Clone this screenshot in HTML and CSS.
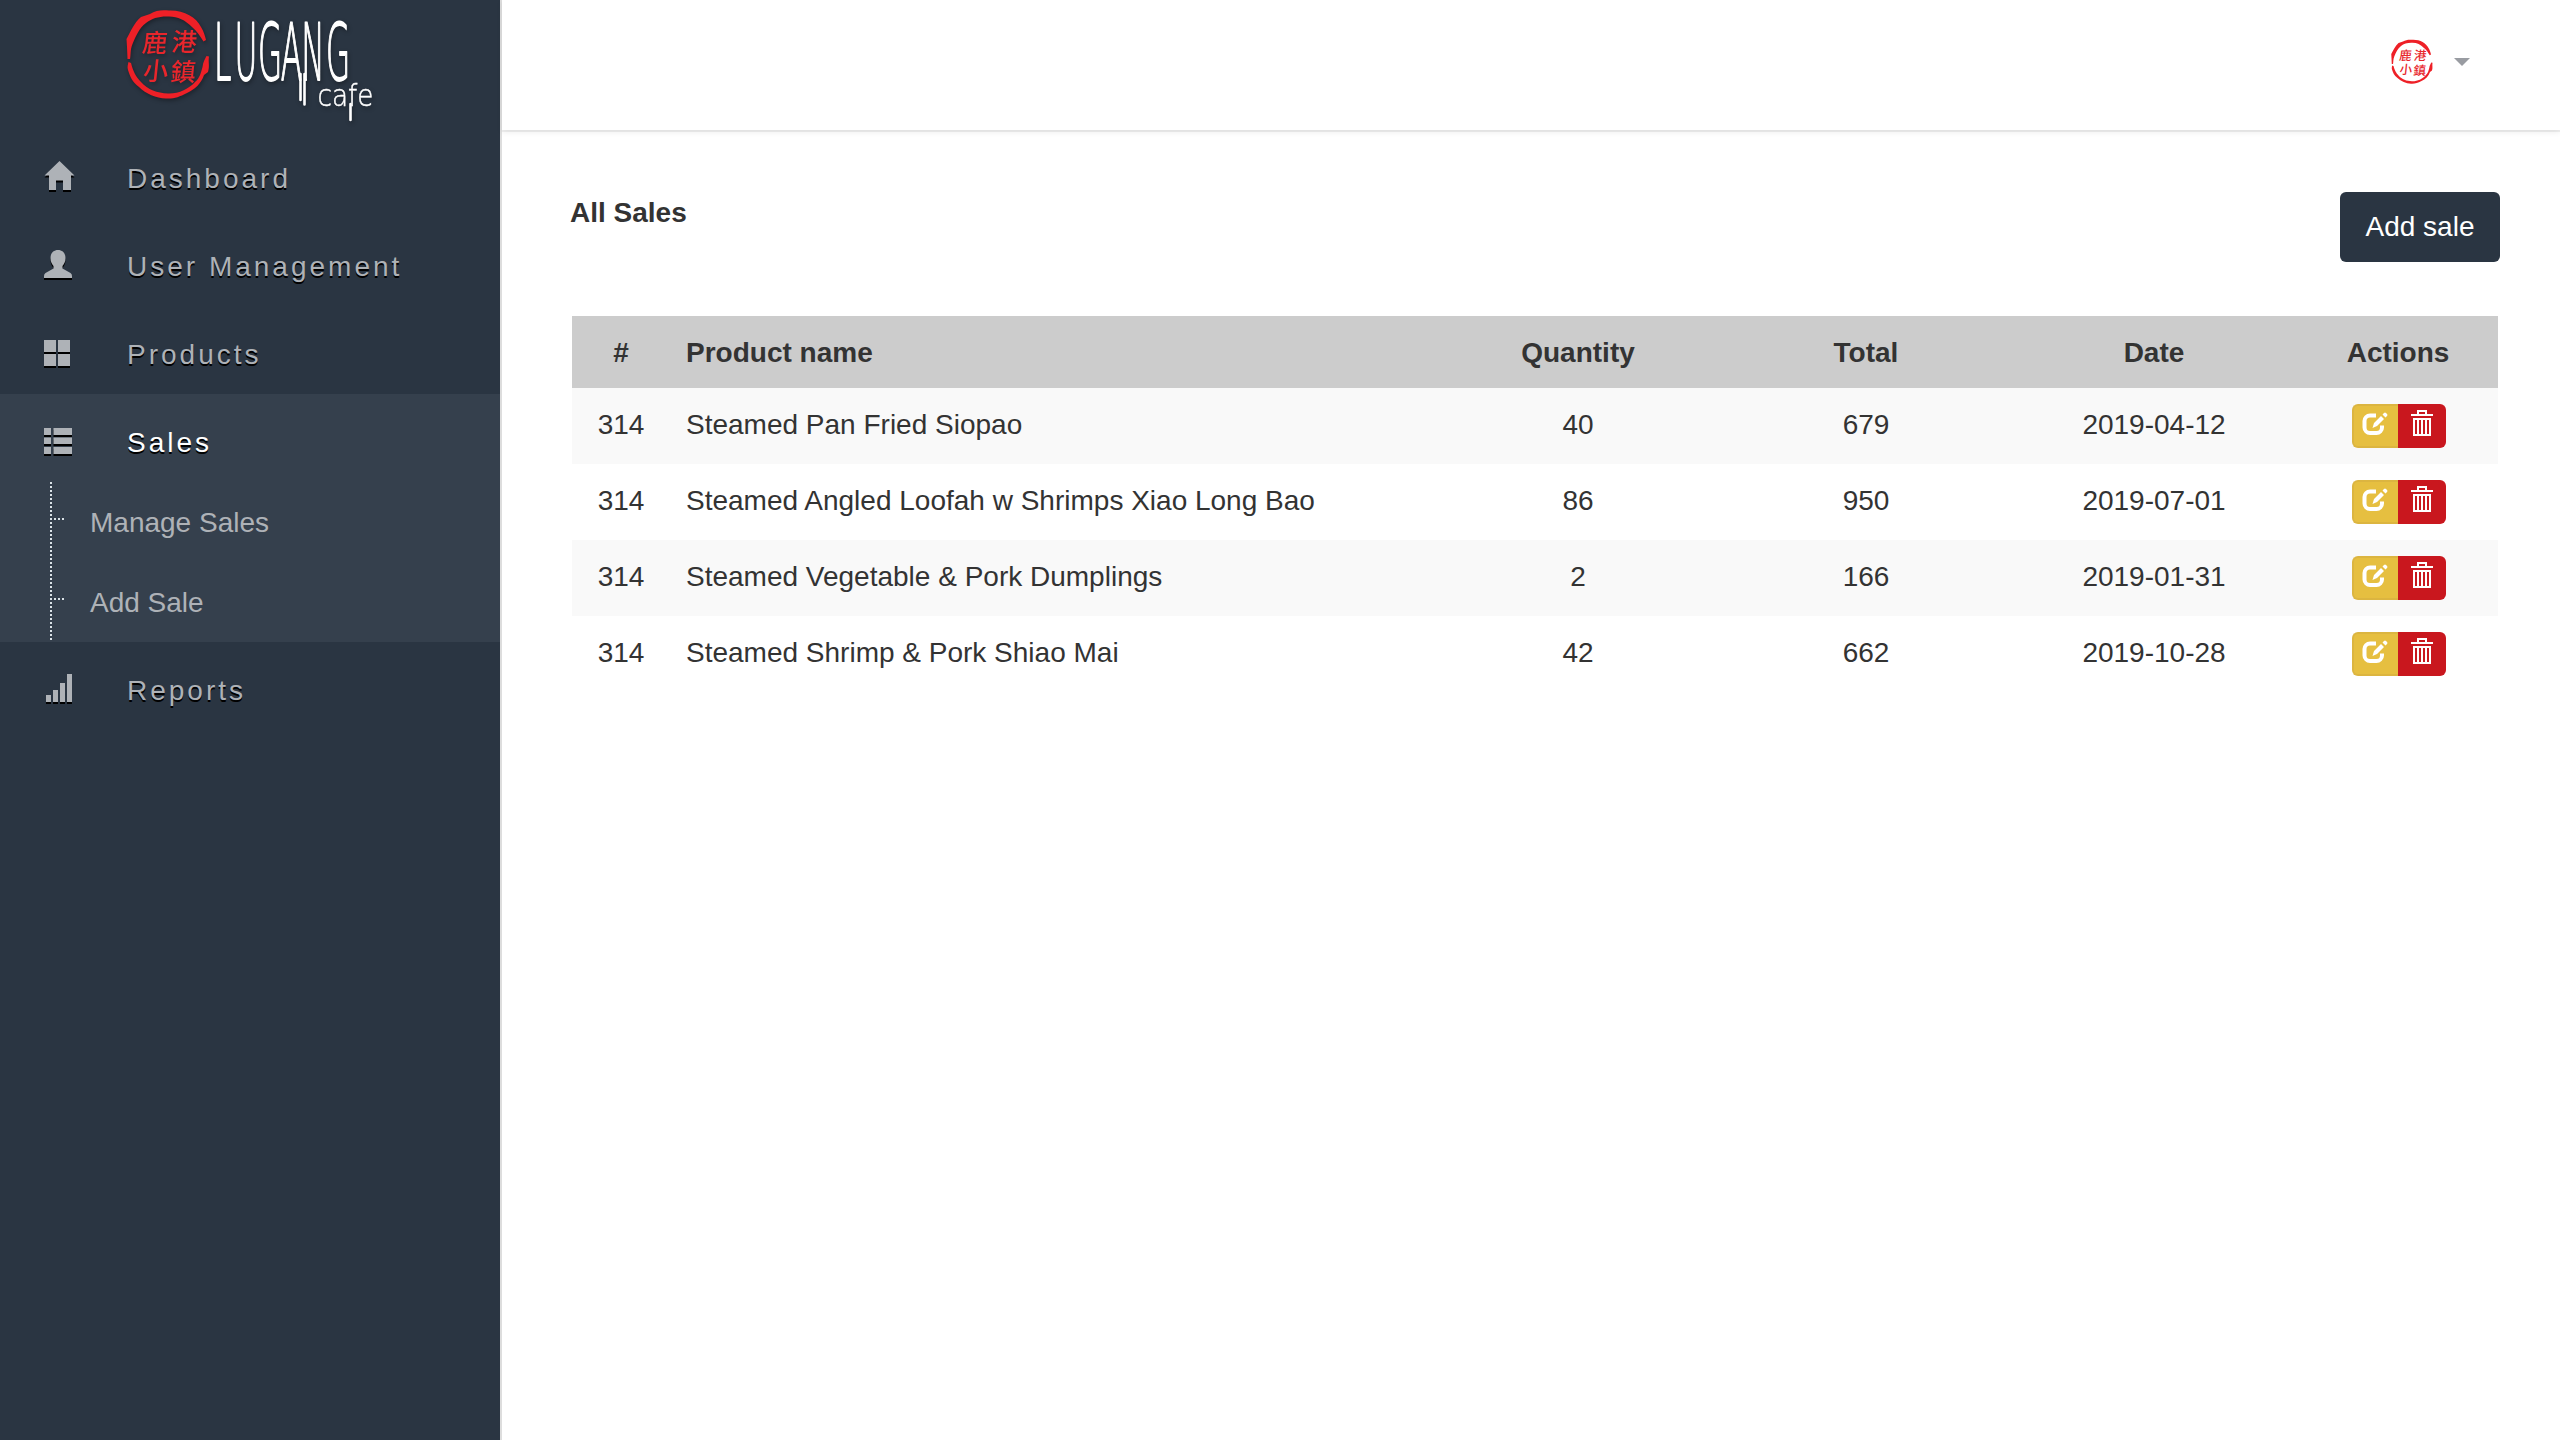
FILE: index.html
```
<!DOCTYPE html>
<html lang="en">
<head>
<meta charset="utf-8">
<title>All Sales</title>
<link rel="stylesheet" href="styles.css">
</head>
<body>
<svg width="0" height="0" class="defs">
  <symbol id="seal" viewBox="0 0 84 92" overflow="visible">
    <g fill="#ee2027">
      <path d="M1.500 50L1 38L0.500 30C5 22 8 14 15 8L24 5C30 1 36 1 43 1.500C58 1 70 8 75 18C78 23 79 27 80 31L77.500 32.500C74 27 71 22 66 18C59 11 52 7.500 43 7.500C34 7 26 9 20 14C13 19 10 27 6.500 35C4 41 5 46 4 50Z"/>
      <path d="M2.500 53L5 54C7 62 10 68 15 73C22 81 31 84 42 84.500C52 85 63 80 69 73C74 69 75 63 76.500 58C77 53 79 50 80.500 47L83 47.500C82 53 84 57 82 63L78 66C75 75 69 80 61 84C53 88 48 90 40 89.500C30 89 20 85 13 78C6 73 4 67 2 61C1 58 2 55 2.500 53Z"/>
    </g>
    <g class="seal-text" transform="skewX(-6)">
      <text x="20" y="43">鹿</text><text x="49.500" y="42">港</text>
      <text x="24" y="71">小</text><text x="51.500" y="72">鎮</text>
    </g>
  </symbol>
  <symbol id="edit" viewBox="0 0 26 24">
    <path d="M14 3.500H8A5.500 5.500 0 0 0 2.500 9V15.500A5.500 5.500 0 0 0 8 21H14.500A5.500 5.500 0 0 0 20 15.500V13.500" fill="none" stroke="#fff" stroke-width="4"/>
    <path d="M10.500 16L12 11L19 4L22 7L15 14ZM20.500 2.500L22 1Q23 0 24 1L25 2Q26 3 25 4L23.500 5.500Z" fill="#fff"/>
  </symbol>
  <symbol id="trash" viewBox="0 0 22 26">
    <path d="M0 4H22V6H0ZM6 0H16V4H14V2H8V4H6ZM2 8H20V26H2ZM4 10V24H6V10ZM8 10V24H10V10ZM12 10V24H14V10ZM16 10V24H18V10Z" fill="#fff" fill-rule="evenodd"/>
  </symbol>
</svg>

<div class="app">
  <aside class="sidebar">
    <div class="brand">
      <svg class="logo" width="300" height="130" viewBox="100 0 300 130" role="img" aria-label="Lugang cafe">
        <use href="#seal" x="126" y="9" width="84" height="92"/>
        <g class="wordmark">
          <text class="name" transform="translate(214 80) scale(.4 1)" font-size="78" x="0 51 110 167 218 280">LUGANG</text>
          <text transform="translate(317.500 106)" font-size="31" textLength="56" lengthAdjust="spacingAndGlyphs">cafe</text>
        </g>
        <path d="M300.500 74V100M304.500 74V104.500M350.500 104V120" stroke="#fff" stroke-width="2.600" stroke-linecap="round"/>
      </svg>
    </div>
    <nav class="menu">
      <a class="item"><svg class="icon" viewBox="0 0 32 32"><path d="M15.500 1L30.500 15.500H27V30H19V20.500H12V30H5V15.500H.500Z"/></svg>Dashboard</a>
      <a class="item"><svg class="icon" viewBox="0 0 32 32"><path d="M14 2C18.500 2 21.500 5 21.500 10C21.500 14 20 16 18.500 18V20.500L26.500 25Q28 26 28 28V30H0V28Q0 26 1.500 25L9.500 20.500V18C8 16 6.500 14 6.500 10C6.500 5 9.500 2 14 2Z"/></svg>User Management</a>
      <a class="item"><svg class="icon" viewBox="0 0 32 32"><path d="M0 4H12V16H0ZM14 4H26V16H14ZM0 18H12V30H0ZM14 18H26V30H14Z"/></svg>Products</a>
      <div class="group">
        <a class="item active"><svg class="icon" viewBox="0 0 32 32"><path d="M0 4H7V11H0ZM9.500 4H28V11H9.500ZM0 13.500H7V20H0ZM9.500 13.500H28V20H9.500ZM0 23H7V30H0ZM9.500 23H28V30H9.500Z"/></svg>Sales</a>
        <a class="subitem">Manage Sales</a>
        <a class="subitem">Add Sale</a>
      </div>
      <a class="item"><svg class="icon" viewBox="0 0 32 32"><path d="M2 23H7V30H2ZM9 18H14V30H9ZM16 11H21V30H16ZM23 2H28V30H23Z"/></svg>Reports</a>
    </nav>
  </aside>

  <div class="page">
    <header class="topbar">
      <svg class="avatar" width="42" height="46" viewBox="0 0 84 92"><use href="#seal" width="84" height="92"/></svg>
      <span class="caret"></span>
    </header>
    <main class="content">
      <div class="heading"><strong class="title">All Sales</strong><a class="add">Add sale</a></div>
      <table class="sales">
        <colgroup><col class="c-id"><col class="c-name"><col class="c-num"><col class="c-num"><col class="c-num"><col class="c-act"></colgroup>
        <thead><tr><th>#</th><th class="name">Product name</th><th>Quantity</th><th>Total</th><th>Date</th><th>Actions</th></tr></thead>
        <tbody>
          <tr><td>314</td><td class="name">Steamed Pan Fried Siopao</td><td>40</td><td>679</td><td>2019-04-12</td><td class="tools"><div class="actions"><a class="btn edit"><svg width="26" height="24"><use href="#edit"/></svg></a><a class="btn del"><svg width="22" height="26"><use href="#trash"/></svg></a></div></td></tr>
          <tr><td>314</td><td class="name">Steamed Angled Loofah w Shrimps Xiao Long Bao</td><td>86</td><td>950</td><td>2019-07-01</td><td class="tools"><div class="actions"><a class="btn edit"><svg width="26" height="24"><use href="#edit"/></svg></a><a class="btn del"><svg width="22" height="26"><use href="#trash"/></svg></a></div></td></tr>
          <tr><td>314</td><td class="name">Steamed Vegetable &amp; Pork Dumplings</td><td>2</td><td>166</td><td>2019-01-31</td><td class="tools"><div class="actions"><a class="btn edit"><svg width="26" height="24"><use href="#edit"/></svg></a><a class="btn del"><svg width="22" height="26"><use href="#trash"/></svg></a></div></td></tr>
          <tr><td>314</td><td class="name">Steamed Shrimp &amp; Pork Shiao Mai</td><td>42</td><td>662</td><td>2019-10-28</td><td class="tools"><div class="actions"><a class="btn edit"><svg width="26" height="24"><use href="#edit"/></svg></a><a class="btn del"><svg width="22" height="26"><use href="#trash"/></svg></a></div></td></tr>
        </tbody>
      </table>
    </main>
  </div>
</div>
</body>
</html>
```
FILE: styles.css
```
* { box-sizing: border-box; }
body {
  margin: 0;
  background: #fff;
  color: #333;
  font: 28px/40px "Liberation Sans", Arial, "Noto Sans CJK TC", sans-serif;
}
.defs { display: block; height: 0; }
.app { display: flex; height: 1440px; }

/* Sidebar */
.sidebar {
  width: 502px;
  background: #2a3542;
  border-right: 2px solid #ddd;
}
.brand { height: 130px; padding-left: 100px; }
.logo { display: block; filter: drop-shadow(1px 2px 2px rgba(0, 0, 0, .35)); }
.wordmark { fill: #fff; font-family: "DejaVu Sans Light", "DejaVu Sans", sans-serif; font-weight: 200; stroke: #fff; stroke-width: .5px; }
.wordmark .name { stroke-width: 1.8px; stroke-linejoin: round; }
.seal-text { fill: #e8262c; font: 500 25px "Noto Sans CJK TC", sans-serif; }
.item {
  display: flex;
  height: 88px;
  padding: 10px 0 0 44px;
  line-height: 78px;
  letter-spacing: 3px;
  color: #aeb2b7;
  text-shadow: 0 2px 0 #000;
}
.icon {
  width: 32px;
  height: 32px;
  margin: 20px 51px 0 0;
  fill: #aeb2b7;
  filter: drop-shadow(0 2px 0 #000);
}
.group { background: #35404d; }
.active { color: #fff; }
.subitem {
  display: block;
  position: relative;
  height: 80px;
  padding-left: 90px;
  line-height: 82px;
  color: #aeb2b7;
}
.subitem::before {
  content: "";
  position: absolute;
  left: 50px;
  top: 0;
  width: 2px;
  height: 80px;
  background: repeating-linear-gradient(#dbe3e8 0 2px, transparent 2px 4px);
}
.subitem::after {
  content: "";
  position: absolute;
  left: 50px;
  top: 36px;
  width: 14px;
  height: 2px;
  background: repeating-linear-gradient(90deg, #dbe3e8 0 2px, transparent 2px 4px);
}

/* Page */
.page { flex: 1; }
.topbar {
  display: flex;
  justify-content: flex-end;
  height: 130px;
  padding: 39px 90px 0 0;
  background: #fff;
  box-shadow: 0 2px 0 rgba(0, 0, 0, .06), 0 2px 6px rgba(0, 0, 0, .08);
}
.avatar { margin-right: 21px; }
.caret {
  width: 16px;
  height: 8px;
  margin-top: 19px;
  background: #999ca2;
  clip-path: polygon(0 0, 100% 0, 50% 100%);
}
.content { padding: 62px 60px 0 68px; }
.heading { display: flex; justify-content: space-between; height: 124px; }
.title { line-height: 42px; }
.add {
  width: 160px;
  height: 70px;
  border-radius: 6px;
  background: #2a3542;
  color: #fff;
  line-height: 70px;
  text-align: center;
}

/* Table */
.sales {
  width: 1926px;
  margin-left: 2px;
  border-collapse: collapse;
  table-layout: fixed;
}
.c-id { width: 98px; }
.c-name { width: 764px; }
.c-num { width: 288px; }
.c-act { width: 200px; }
.sales th, .sales td { padding: 17px 16px 15px; text-align: center; vertical-align: top; }
.sales th { height: 72px; background: #ccc; }
.sales td { height: 76px; }
.sales .name { text-align: left; }
.sales .tools { padding: 16px; }
.sales tbody tr:nth-child(odd) { background: #f9f9f9; }
.actions { display: flex; margin-left: 38px; }
.btn { display: flex; height: 44px; }
.edit {
  width: 46px;
  padding: 6px 0 0 8px;
  border: 2px solid #dcb540;
  border-right: 0;
  border-radius: 6px 0 0 6px;
  background: #e6bf40;
}
.del {
  width: 48px;
  padding: 6px 0 0 13px;
  border-radius: 0 6px 6px 0;
  background: #c9171e;
}
```
